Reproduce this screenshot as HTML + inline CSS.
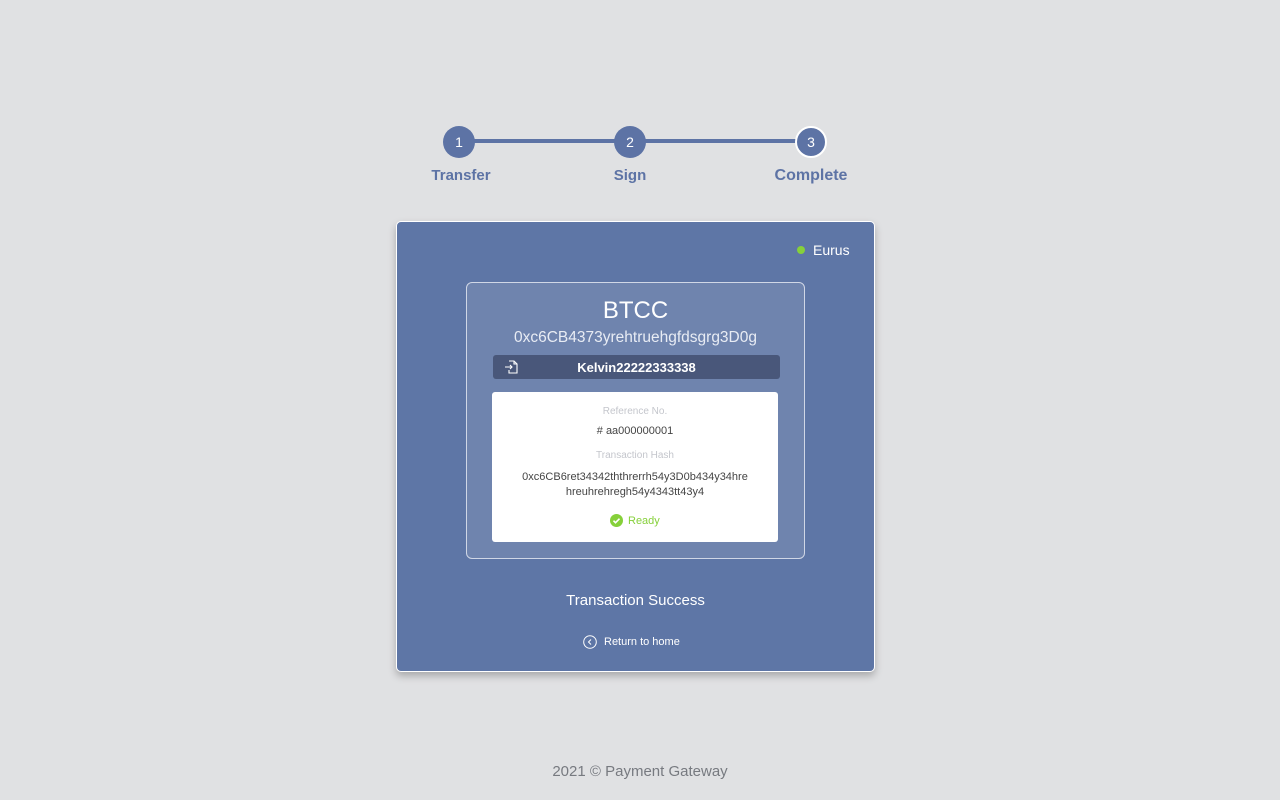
<!DOCTYPE html>
<html><head><style>
*{margin:0;padding:0;box-sizing:border-box}
body{width:1280px;height:800px;background:#e0e1e3;font-family:"Liberation Sans",sans-serif;position:relative;overflow:hidden}
.a{position:absolute}
.c{text-align:center}
.circ{position:absolute;width:32px;height:32px;border-radius:50%;background:#5d73a5;color:#fff;font-size:14px;line-height:32px;text-align:center}
.lbl{position:absolute;color:#5d73a5;font-weight:bold;font-size:15px;width:120px;text-align:center}
</style></head><body>
<div class="a" style="left:459px;top:139px;width:352px;height:4px;background:#5d73a5"></div>
<div class="circ" style="left:443px;top:126px">1</div>
<div class="circ" style="left:614px;top:126px">2</div>
<div class="circ" style="left:795px;top:126px;border:2px solid #fff;line-height:28px">3</div>
<div class="lbl" style="left:401px;top:167px">Transfer</div>
<div class="lbl" style="left:570px;top:167px">Sign</div>
<div class="lbl" style="left:751px;top:167px;font-size:16px">Complete</div>

<div class="a" style="left:396px;top:221px;width:479px;height:451px;background:#5e76a6;border:1px solid #fff;border-radius:5px;box-shadow:0 4px 8px rgba(0,0,0,.25)"></div>
<div class="a" style="left:797px;top:246px;width:8px;height:8px;border-radius:50%;background:#86d03a"></div>
<div class="a" style="left:813px;top:242px;color:#fff;font-size:14px">Eurus</div>

<div class="a" style="left:466px;top:282px;width:339px;height:277px;background:#6f84ae;border:1px solid #d0d7e6;border-radius:6px"></div>
<div class="a c" style="left:466px;top:297px;width:339px;color:#fff;font-size:24px">BTCC</div>
<div class="a c" style="left:466px;top:329px;width:339px;color:#e8ecf4;font-size:15.5px">0xc6CB4373yrehtruehgfdsgrg3D0g</div>
<div class="a" style="left:493px;top:355px;width:287px;height:24px;background:#49577a;border-radius:3px"></div>
<svg class="a" style="left:504px;top:360px" width="14" height="14" viewBox="0 0 14 14" fill="none" stroke="#fff" stroke-width="1.1"><path d="M5 1h5l3 3v9H5v-3M10 1v3h3M1 7h7M6 5l2 2-2 2"/></svg>
<div class="a c" style="left:493px;top:360px;width:287px;color:#fff;font-size:13px;font-weight:bold">Kelvin22222333338</div>

<div class="a" style="left:492px;top:392px;width:286px;height:150px;background:#fff;border-radius:3px"></div>
<div class="a c" style="left:492px;top:406px;width:286px;color:#c4c6cc;font-size:10px">Reference No.</div>
<div class="a c" style="left:492px;top:425px;width:286px;color:#444;font-size:11px"># aa000000001</div>
<div class="a c" style="left:492px;top:450px;width:286px;color:#c4c6cc;font-size:10px">Transaction Hash</div>
<div class="a c" style="left:492px;top:470px;width:286px;color:#444;font-size:11px;line-height:15px">0xc6CB6ret34342ththrerrh54y3D0b434y34hre<br>hreuhrehregh54y4343tt43y4</div>
<div class="a" style="left:610px;top:514px;width:13px;height:13px;border-radius:50%;background:#86d03a"></div>
<svg class="a" style="left:610px;top:514px" width="13" height="13" viewBox="0 0 13 13"><path d="M3.5 6.7l2 2 4-4" stroke="#fff" stroke-width="1.6" fill="none"/></svg>
<div class="a" style="left:628px;top:515px;color:#86d03a;font-size:11px">Ready</div>

<div class="a c" style="left:396px;top:592px;width:479px;color:#fff;font-size:15px">Transaction Success</div>
<svg class="a" style="left:583px;top:635px" width="14" height="14" viewBox="0 0 14 14" fill="none" stroke="#fff" stroke-width="1"><circle cx="7" cy="7" r="6.3"/><path d="M8 4.5L5.5 7 8 9.5"/></svg>
<div class="a" style="left:604px;top:636px;color:#fff;font-size:11px">Return to home</div>

<div class="a c" style="left:0;top:763px;width:1280px;color:#777a80;font-size:15px">2021 © Payment Gateway</div>
</body></html>
